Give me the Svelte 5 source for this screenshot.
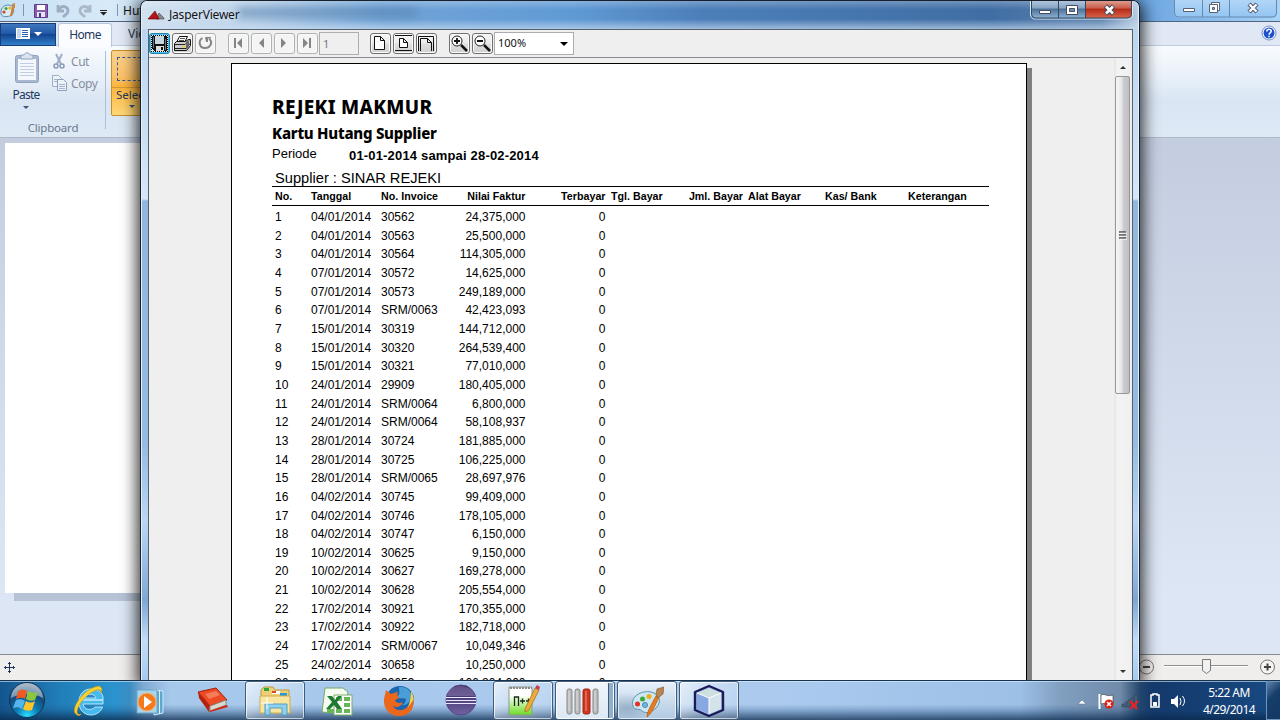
<script>
  const raw = [
    ['04/01/2014', '30562', '24,375,000'], ['04/01/2014', '30563', '25,500,000'],
    ['04/01/2014', '30564', '114,305,000'], ['07/01/2014', '30572', '14,625,000'],
    ['07/01/2014', '30573', '249,189,000'], ['07/01/2014', 'SRM/0063', '42,423,093'],
    ['15/01/2014', '30319', '144,712,000'], ['15/01/2014', '30320', '264,539,400'],
    ['15/01/2014', '30321', '77,010,000'], ['24/01/2014', '29909', '180,405,000'],
    ['24/01/2014', 'SRM/0064', '6,800,000'], ['24/01/2014', 'SRM/0064', '58,108,937'],
    ['28/01/2014', '30724', '181,885,000'], ['28/01/2014', '30725', '106,225,000'],
    ['28/01/2014', 'SRM/0065', '28,697,976'], ['04/02/2014', '30745', '99,409,000'],
    ['04/02/2014', '30746', '178,105,000'], ['04/02/2014', '30747', '6,150,000'],
    ['10/02/2014', '30625', '9,150,000'], ['10/02/2014', '30627', '169,278,000'],
    ['10/02/2014', '30628', '205,554,000'], ['17/02/2014', '30921', '170,355,000'],
    ['17/02/2014', '30922', '182,718,000'], ['17/02/2014', 'SRM/0067', '10,049,346'],
    ['24/02/2014', '30658', '10,250,000'], ['24/02/2014', '30659', '106,204,000']
  ];
  const heads = ['No.', 'Tanggal', 'No. Invoice', 'Nilai Faktur', 'Terbayar', 'Tgl. Bayar', 'Jml. Bayar', 'Alat Bayar', 'Kas/ Bank', 'Keterangan'];
  const right = [3, 4, 6];
</script>

<div class="desktop">
  <!-- Paint, behind -->
  <section class="paint">
    <header class="ptitle">
      <svg width="140" height="22" viewBox="0 0 140 22">
        <path d="M1 11C2 5 8 4 12 6c3 3 2 8-2 10-4 1-8 1-9-2Z" fill="#d3edf6" stroke="#5589a6"/>
        <circle cx="4" cy="12" r="1.6" fill="#e03b2a"/><circle cx="6" cy="8.5" r="1.6" fill="#44a53b"/><circle cx="10" cy="8" r="1.6" fill="#f2b01e"/>
        <path d="M11 16l2-9" stroke="#e0761c" stroke-width="2"/><path d="M12 4l3-1v5h-3z" fill="#c98a48"/>
        <path d="M23.500 4v12M117.500 4v12" stroke="#8392a6"/>
        <path d="M34.500 4.500h13v13h-13z" fill="#8c5bb0" stroke="#5f3b8c"/><path d="M37 5h8v5h-8z" fill="#fff"/><path d="M37 12h8v5h-8z" fill="#dfe6f2"/><path d="M39 13h2v4h-2z" fill="#533580"/>
        <path d="M58 5v6h6M59 9c3-4 9-3 9 2 0 3-3 4-5 6" fill="none" stroke="#9eacc3" stroke-width="2.800"/>
        <path d="M90 5v6h-6M89 9c-3-4-9-3-9 2 0 3 3 4 5 6" fill="none" stroke="#abb7ca" stroke-width="2.800"/>
        <path d="M100 10.500h7" stroke="#222"/><path d="M100 12h7l-3.500 3.500z" fill="#222"/>
      </svg>
      <span class="hut">Hut</span>
    </header>
    <div class="tabs">
      <div class="filetab">
        <svg width="54" height="21" viewBox="0 0 54 21"><path d="M15 4h14v11H15z" fill="#fff"/><path d="M16 5h4v9h-4z" fill="#c4d5ef"/><path d="M21 6.500h6M21 8.500h6M21 10.500h6M21 12.500h6" stroke="#2761af"/><path d="M33 8h8l-4 4z" fill="#fff"/></svg>
      </div>
      <div class="home">Home</div><span class="view">View</span>
      <svg class="help" width="16" height="16" viewBox="0 0 16 16"><circle cx="8" cy="8" r="7" fill="#fff" stroke="#7390c9"/><circle cx="8" cy="8" r="5.500" fill="#1b51cc"/><path d="M5.800 6.500c.2-3 4.600-2.600 4.400-.2C10 8 8 7.700 8 9.700M8 10.800v1.500" fill="none" stroke="#fff" stroke-width="1.500"/></svg>
    </div>
    <div class="ribbon">
      <div class="clip">
        <div class="tools">
          <div class="paste">
            <svg width="28" height="32" viewBox="0 0 28 32"><rect x="2.500" y="3.500" width="23" height="27" rx="2" fill="#a9b8d0" stroke="#8fa2bf"/><path d="M5 7h18v21H5z" fill="#f4f7fc"/><path d="M7 11.500h14M7 14.500h14M7 17.500h14M7 20.500h14M7 23.500h14" stroke="#c1cde0"/><path d="M8 3h3c1-3 5-3 6 0h3v4H8z" fill="#dce4ef" stroke="#8fa2bf"/></svg>
            <span>Paste</span><i class="down"></i>
          </div>
          <div class="cutcopy">
            <div><svg width="19" height="18" viewBox="0 0 19 18"><path d="M4 2l5 10M10 2L5 12" stroke="#9dadc5" stroke-width="2"/><circle cx="4" cy="14" r="2" fill="none" stroke="#8799b6" stroke-width="1.500"/><circle cx="10" cy="14" r="2" fill="none" stroke="#8799b6" stroke-width="1.500"/></svg>Cut</div>
            <div><svg width="19" height="18" viewBox="0 0 19 18"><path d="M.5 1.500h6l3 3v8h-9z" fill="#edf2f9" stroke="#9dadc5"/><path d="M5.500 5.500h6l3 3v8h-9z" fill="#edf2f9" stroke="#8c9fbd"/><path d="M2 5.500h3M2 7.500h3M7 10.500h6M7 12.500h6M7 14.500h6" stroke="#a5b4cc"/></svg>Copy</div>
          </div>
        </div>
        <div class="cap">Clipboard</div>
      </div>
      <div class="select"><div class="seltop"><b></b></div><div class="sellow"><span>Select</span><i class="down"></i></div></div>
    </div>
    <div class="canvas"><div class="sheet"></div></div>
    <footer class="status">
      <svg width="13" height="13" viewBox="0 0 13 13"><path d="M6.500 1v11M1 6.500h11M5 2.500h3M5 10.500h3M2.500 5v3M10.500 5v3" stroke="#20365c"/></svg>
      <svg class="zoom" width="142" height="20" viewBox="0 0 142 20"><g fill="#f5f3f2" stroke="#777"><circle cx="8.500" cy="10" r="7"/><circle cx="129.500" cy="10" r="7"/></g><path d="M5 10h7M126 10h7M129.500 6.500v7" stroke="#444" stroke-width="2"/><path d="M26 8.500h84" stroke="#8f8f8f"/><path d="M26 9.500h84" stroke="#fff"/><path d="M64.500 2.500h8v11l-4 3-4-3z" fill="#f1f1f1" stroke="#777"/></svg>
    </footer>
  </section>
  <div class="caption back">
    <svg width="103" height="18" viewBox="0 0 103 18"><path d="M.5 0v13q0 4 4 4h94q4 0 4-4V0M28.500 0v17M55.500 0v17" fill="none" stroke="#6688b1"/><path d="M9.500 8.500h11v3h-11z" fill="#fff" stroke="#576278"/><path d="M37.500 2.500h8v8h-8z" fill="#fff" stroke="#576278"/><path d="M35.500 4.500h8v8h-8z" fill="#fff" stroke="#576278"/><path d="M38.500 7.500h2v2h-2z" fill="#8fb7e2" stroke="#576278"/><path d="M75 4l8 8m0-8l-8 8" stroke="#576278" stroke-width="4.500"/><path d="M75.500 4.500l7 7m0-7l-7 7" stroke="#fff" stroke-width="2.300"/></svg>
  </div>

  <!-- Report viewer window -->
  <section class="jasper">
    <header class="jtitle">
      <div class="blur"></div>
      <svg width="18" height="10" viewBox="0 0 18 10"><path d="M9 9l3-6 5 5v1z" fill="#888" stroke="#444" stroke-width=".6"/><path d="M1 9l7-8 4 8z" fill="#b5121b" stroke="#600" stroke-width=".6"/></svg>
      <span>JasperViewer</span>
      <svg class="jcap" width="104" height="20" viewBox="0 0 104 20">
        <defs><linearGradient id="r" x2="0" y2="1"><stop stop-color="#e0a597"/><stop offset=".45" stop-color="#cb5d4b"/><stop offset=".5" stop-color="#b52a17"/><stop offset="1" stop-color="#d8674a"/></linearGradient><linearGradient id="b" x2="0" y2="1"><stop stop-color="#b5c9df"/><stop offset=".45" stop-color="#86a3c3"/><stop offset=".5" stop-color="#4c7097"/><stop offset="1" stop-color="#8db3d4"/></linearGradient></defs>
        <path d="M1 0h55v18H5q-4 0-4-4z" fill="url(#b)"/><path d="M56 0h46v14q0 4-4 4H56z" fill="url(#r)"/>
        <path d="M.5 0v14q0 5 5 5h92q5 0 5-5V0" fill="none" stroke="#dbe9f7"/><path d="M1.500 0v14q0 4 4 4h92q4 0 4-4V0M28.500 0v18M55.500 0v18" fill="none" stroke="#33465e"/>
        <path d="M9.500 10.500h11v3h-11z" fill="#fff" stroke="#444d5e"/><path d="M36.500 5.500h11v9h-11z" fill="#fff" stroke="#444d5e"/><path d="M39.500 8.500h5v3h-5z" fill="#6e90b4" stroke="#444d5e"/>
        <path d="M75.500 6l8 8m0-8l-8 8" stroke="#454a5b" stroke-width="4.800"/><path d="M76 6.500l7 7m0-7l-7 7" stroke="#fff" stroke-width="2.600"/>
      </svg>
    </header>
    <div class="client">
      <div class="toolbar">
        <button class="focus" aria-label="Save"><svg viewBox="0 0 21 21" shape-rendering="crispEdges"><path d="M2 2h17v17H2z" fill="#dfe9ee"/><path d="M3 3h15v15H5l-2-2z" fill="#111"/><path d="M6 3h9v8H6z" fill="#c7d5dc"/><path d="M7 13h8v5H7z" fill="#ddd"/><path d="M12 14h2v3h-2z" fill="#111"/><path d="M4.500 4v11M16.500 6v11" stroke="#68777e"/><path d="M2 2.500h17M2 18.500h17M2.500 2v17M18.500 2v17" fill="none" stroke="#000" stroke-dasharray="1 1"/></svg></button>
        <button aria-label="Print"><svg viewBox="0 0 21 21"><path d="M7.500 3.500h8l-3 6h-8z" fill="#fff" stroke="#111"/><path d="M8 5.500h5M7 7.500h5" stroke="#555"/><path d="M2.500 10.500l2-2h9l3-2h2v6l-4 5h-12z" fill="#ccc" stroke="#111"/><path d="M3 11.500h10l4-4M3 15.500h11l4-5" fill="none" stroke="#222"/><path d="M14 10v7l3-4V8z" fill="#666"/><path d="M10 13.500h3" stroke="#e4d91c" stroke-width="1.500"/></svg></button>
        <button class="off" aria-label="Reload"><svg viewBox="0 0 21 21"><path d="M7.500 5C3 7.500 4 15 10 15s8-6.500 4-9" fill="none" stroke="#858585" stroke-width="2"/><path d="M10 4h6v1.500h-3V9h-2z" fill="#858585"/></svg></button>
        <span class="gap"></span>
        <button class="off" aria-label="First"><svg viewBox="0 0 21 21"><path d="M6 5h2v10H6zM14 5v10l-5-5z" fill="#858585"/></svg></button>
        <button class="off" aria-label="Previous"><svg viewBox="0 0 21 21"><path d="M13 5v10l-5-5z" fill="#858585"/></svg></button>
        <button class="off" aria-label="Next"><svg viewBox="0 0 21 21"><path d="M7 5v10l5-5z" fill="#858585"/></svg></button>
        <button class="off" aria-label="Last"><svg viewBox="0 0 21 21"><path d="M12 5h2v10h-2zM6 5v10l5-5z" fill="#858585"/></svg></button>
        <div class="pageno">1</div>
        <button aria-label="Actual size"><svg viewBox="0 0 21 21"><path d="M4.500 3.500h6l4 4v9h-10z M10.500 3.500v4h4" fill="#fff" stroke="#111"/></svg></button>
        <button aria-label="Fit page"><svg viewBox="0 0 21 21"><path d="M2 2.500h17M2 17.500h17" stroke="#111"/><path d="M6.500 5.500h4l4 4v5h-8z M10.500 5.500v4h4" fill="#fff" stroke="#111"/></svg></button>
        <button aria-label="Fit width"><svg viewBox="0 0 21 21"><path d="M2.500 18V3.500h15V18M4.500 18V5.500h7l4 4V18M11.500 5.500v4h4" fill="none" stroke="#111"/></svg></button>
        <span class="gap"></span>
        <button aria-label="Zoom in"><svg viewBox="0 0 21 21"><circle cx="8" cy="8" r="5" fill="#fff" stroke="#222"/><path d="M12 12l6 6" stroke="#111" stroke-width="2.500"/><path d="M5 8h6M8 5v6" stroke="#111" stroke-width="1.800"/></svg></button>
        <button aria-label="Zoom out"><svg viewBox="0 0 21 21"><circle cx="8" cy="8" r="5" fill="#fff" stroke="#222"/><path d="M12 12l6 6" stroke="#111" stroke-width="2.500"/><path d="M5 8h6" stroke="#111" stroke-width="1.800"/></svg></button>
        <div class="combo"><span>100%</span><i></i></div>
      </div>
      <div class="viewer">
        <div class="area">
          <article class="page">
            <h1>REJEKI MAKMUR</h1>
            <h2>Kartu Hutang Supplier</h2>
            <div class="period"><span>Periode</span><b>01-01-2014 sampai 28-02-2014</b></div>
            <div class="supplier">Supplier : SINAR REJEKI</div>
            <div class="row head">
              {#each heads as h, i}<span class:r={right.includes(i)}>{h}</span>{/each}
            </div>
            {#each raw as d, i}
              <div class="row"><span>{i + 1}</span><span>{d[0]}</span><span>{d[1]}</span><span class="r">{d[2]}</span><span class="r">0</span></div>
            {/each}
          </article>
          <div class="pshadow"></div>
        </div>
        <div class="scroll"><i class="up"></i><div class="thumb"><svg width="8" height="9" viewBox="0 0 8 9"><path d="M0 1h7M0 4h7M0 7h7" stroke="#555" stroke-width="1.300"/><path d="M1 2.300h7M1 5.300h7M1 8.300h7" stroke="#fff" stroke-width=".8"/></svg></div><i class="dn"></i></div>
      </div>
    </div>
  </section>

  <!-- Taskbar -->
  <nav class="taskbar">
    <div class="start">
      <svg width="38" height="38" viewBox="0 0 38 38"><defs><radialGradient id="orb" cx=".5" cy=".95" r=".9"><stop stop-color="#28e0ff"/><stop offset=".35" stop-color="#0e7db5"/><stop offset=".7" stop-color="#144b7c"/><stop offset="1" stop-color="#6d8ba5"/></radialGradient></defs><circle cx="19" cy="19" r="17.500" fill="url(#orb)" stroke="#12314f"/><path d="M3 17C4 6 13 2 19 2s15 4 16 15c-9-5-23-5-32 0Z" fill="#fff" opacity=".4"/><path d="M10 10c3-2 6-2 9 0l-2 8c-3-2-6-1-9 0z" fill="#ee5a24"/><path d="M20 10c3 2 6 2 10 1l-3 8c-3 1-6 1-9-1z" fill="#8cc63e"/><path d="M8 19c3-1 6-1 9 1l-3 8c-3-2-5-2-9-1z" fill="#55b6ef"/><path d="M18 20c3 2 6 2 9 0l-3 9c-3 1-6 1-9-1z" fill="#fcc62b"/></svg>
    </div>
    <div class="task"><svg viewBox="0 0 34 34"><path d="M11 16H31C32 10 27 5 19 5 12 5 7 10 7 18s5 13 12 13c5 0 10-3 11.500-8H23c-3 4-11 3-12-3H31V16ZM13 14c1-5 10-5 11 0z" fill="#46b9ee" fill-rule="evenodd" stroke="#d4f4ff" stroke-width=".8"/><path d="M4 30C-2 26 10 7 23 3c6-2 8 1 6 6 0-4-3-4-7-2C13 11 5 22 5 28c0 2 2 3 4 2-1 2-3 2-5 0" fill="#f8d22e" stroke="#d39b0a" stroke-width=".6"/></svg></div>
    <div class="task"><svg viewBox="0 0 34 34"><path d="M20 6l9 1v22l-9 2z" fill="#5fa7cd" stroke="#c8ecfb"/><path d="M25.500 6v24" stroke="#d7f1fd"/><path d="M3 6h20v23H3z" fill="#a7d5ed" stroke="#6ba5c5"/><circle cx="13" cy="18" r="9" fill="#f47a1c" stroke="#fbb16c"/><path d="M10 12l8 6-8 6z" fill="#fff"/></svg></div>
    <div class="task"><svg viewBox="0 0 34 34"><path d="M2 8l18-4 11 12-17 6z" fill="#ed4a25" stroke="#a71c0a"/><path d="M2 8l1 6 10 14 1-6z" fill="#b8200e"/><path d="M14 22l16-6v5l-16 6z" fill="#d9d9cf" stroke="#8b867c"/><path d="M13 27l18-6 1 2-18 5z" fill="#d42610"/><path d="M9 10l11-3 4 4-11 4z" fill="#f47c59"/></svg></div>
    <div class="task open"><svg viewBox="0 0 34 34"><path d="M3 6l3-3h9l2 3h14v9H3z" fill="#efcf74" stroke="#bb9840"/><path d="M6 4h5v3H6z" fill="#28a83b"/><path d="M14 7h8v3h-8z" fill="#fff"/><path d="M14 7h4v2h-4z" fill="#d44824"/><path d="M22 9h7v3h-7z" fill="#2498d8"/><path d="M2 12h30v17H2z" fill="#f8e5a0" stroke="#cfae57"/><path d="M7 31V20h22v11h-5v-7H12v7z" fill="#8fd1ee" stroke="#519ec1"/><path d="M9 13v12M3 19h12" stroke="#fff"/></svg></div>
    <div class="task"><svg viewBox="0 0 34 34"><path d="M2 28l3-24h18l5 4-3 22z" fill="#f5fbf0" stroke="#74a864"/><path d="M14 11h18v20H14z" fill="#fff" stroke="#7bab6d"/><path d="M16 13h6v4h-6zM24 13h6v4h-6zM24 19h6v4h-6zM16 25h6v4h-6zM24 25h6v4h-6zM7 25h7v4H7z" fill="#69b65a"/><path d="M7 12h5l3 4 3-4h4l-5 6 5 7h-5l-3-4-4 4H6l6-7z" fill="#1e7a31"/></svg></div>
    <div class="task"><svg viewBox="0 0 34 34"><circle cx="18" cy="16" r="14" fill="#1c65b0"/><path d="M17 3c9-1 13 5 12 11-1 5-6 8-10 7 3 0 5-3 5-6-3-2-8 1-10-3 5 0 3-5 3-9Z" fill="#4a9ed6"/><path d="M29 7c7 13-1 22-12 24 10-5 12-14 12-24" fill="#ffd342"/><path d="M4 6l5 4c3-1 5-2 7-2-1 3-1 4 1 5-1 3-4 2-4 4 2 2 5 3 8 1-2 6-9 6-10 3 1 6 13 9 20-5 2 10-5 16-14 16S1 25 2 15z" fill="#ea671c"/></svg></div>
    <div class="task"><svg viewBox="0 0 34 34"><defs><linearGradient id="ec" x2="0" y2="1"><stop stop-color="#352158"/><stop offset="1" stop-color="#7064a4"/></linearGradient></defs><circle cx="17" cy="16" r="15" fill="url(#ec)" stroke="#594481"/><path d="M5 6Q16-2 28 6l3 6H3z" fill="#a698ca" opacity=".4"/><path d="M2 13.500h30M2 16.500h30M2 19.500h30" stroke="#eceaff" stroke-width="1.200"/></svg></div>
    <div class="task open"><svg viewBox="0 0 34 34"><defs><linearGradient id="np" x2="0" y2="1"><stop offset=".3" stop-color="#fff"/><stop offset="1" stop-color="#6bdc20"/></linearGradient></defs><path d="M3 3h23v28H3z" fill="url(#np)" stroke="#8c9989"/><path d="M4 4h22" stroke="#888" stroke-width="2" stroke-dasharray="2 1"/><path d="M8.500 22V13h4v9M14 17h5M16.500 14.500v5M20 17h5M22.500 14.500v5" fill="none" stroke="#182d15" stroke-width="1.300"/><path d="M19 25L29 4l4 2-10 20-4 2z" fill="#efab34" stroke="#9c6828" stroke-width=".7"/><path d="M29 4l2-3 3 2-1 3z" fill="#c73954"/></svg></div>
    <div class="task open stack"><svg viewBox="0 0 34 34"><g fill="#bbb" stroke="#898989"><rect x="1" y="5" width="5" height="25" rx="2"/><rect x="9" y="5" width="5" height="25" rx="2"/><rect x="27" y="5" width="5" height="25" rx="2"/></g><rect x="17" y="5" width="7" height="25" rx="2" fill="#cf361c" stroke="#a42311"/><path d="M3 7v20M11 7v20M20 7v20M29 7v20" stroke="#fff" opacity=".5"/></svg></div>
    <div class="task open smudge"><svg viewBox="0 0 34 34"><path d="M3 22C0 13 11 6 21 8c9 2 11 10 5 16-6 6-12 5-14 3-1-3-8 0-9-5Z" fill="#cbe7f4" stroke="#5c94ad"/><circle cx="7.500" cy="20" r="2.500" fill="#e33225"/><circle cx="12.500" cy="15" r="2.500" fill="#3caa31"/><circle cx="19" cy="12.500" r="2.500" fill="#f0ac15"/><circle cx="15" cy="21" r="2.500" fill="#79b7d7" stroke="#4287ae"/><path d="M17 33c0-5 4-12 9-21l3 1c-4 9-7 16-12 20Z" fill="#ec7b1c" stroke="#ae5512" stroke-width=".7"/><path d="M26 11l1-6 7-2-1 7-5 4z" fill="#b98551" stroke="#805325" stroke-width=".6"/></svg></div>
    <div class="task open"><svg viewBox="0 0 34 34"><path d="M17 2l14 6v18l-14 6-14-6V8z" fill="#9db9e8" stroke="#1b1b57" stroke-width="2.400" stroke-linejoin="round"/><path d="M5 9l12-5 12 5-12 5z" fill="#cddfdf"/><path d="M17 14l12-5v16l-12 5z" fill="#d3e3e9"/><path d="M5 9l12 5v16L5 25z" fill="#88a8e2"/><path d="M5 9l12 5 12-5M17 14v16" fill="none" stroke="#fff"/></svg></div>
    <div class="tray">
      <svg width="110" height="24" viewBox="0 0 110 24"><path d="M1 15h8l-4-4z" fill="#fff" stroke="#55718e" stroke-width=".5"/><path d="M22.500 5v15" stroke="#fff" stroke-width="2"/><path d="M24 6c4-2 5 2 12 0v9c-5 2-7-2-12 0z" fill="#fff" stroke="#333" stroke-width=".6"/><circle cx="32" cy="15" r="4.500" fill="#d91f16"/><path d="M30 13l4 4m0-4l-4 4" stroke="#fff" stroke-width="1.500"/><path d="M45 15h2v3h-2zM48 13h2v5h-2zM51 11h2v7h-2zM54 9h2v9h-2zM58 6h2v12h-2z" fill="#586d83" stroke="#263b51" stroke-width=".6"/><path d="M53 12l7 8m1-8l-8 8" stroke="#f02020" stroke-width="2"/><path d="M74 6h2V5h4v1h2v12h-8z" fill="none" stroke="#fff" stroke-width="1.500"/><path d="M76 13h4v4h-4z" fill="#fff"/><path d="M94 10h3l4-4v13l-4-4h-3z" fill="#fff"/><path d="M103 9q2 3 0 7M105.500 7q4 5 0 10" stroke="#fff" fill="none"/></svg>
      <div class="clock"><span>5:22 AM</span><span>4/29/2014</span></div>
      <div class="peek"></div>
    </div>
  </nav>
</div>

<style>
  :global(body) { margin: 0; overflow: hidden; }
  .desktop { position: relative; width: 1280px; height: 720px; overflow: hidden; font: 12px "Noto Sans", sans-serif; color: #1e395b; }
  .desktop * { box-sizing: border-box; }
  svg { display: block; flex: none; }
  .paint { position: absolute; inset: 0 0 39px; display: flex; flex-direction: column; }
  .ptitle { height: 22px; display: flex; border-bottom: 1px solid #51657f; background: linear-gradient(90deg, #c5e0f4 0, #d8eaf8 110px, #7aa9dc 300px, #6aa4df 1140px, #a9d3f7 1280px); }
  .hut { margin-left: -17px; font-size: 12px; line-height: 21px; color: #111; }
  .tabs { height: 24px; display: flex; background: #dfe8f4; border-bottom: 1px solid #bccce0; position: relative; }
  .filetab { width: 56px; height: 23px; margin-top: 1px; background: linear-gradient(#3f78bd, #2159a8 45%, #15448f 50%, #2f7fc9); border: 1px solid #173e7b; }
  .home { width: 54px; height: 24px; margin: 1px 0 0 2px; padding-top: 2px; text-align: center; background: #fafcff; border: 1px solid #b4c7de; border-bottom: 0; border-radius: 3px 3px 0 0; letter-spacing: -.6px; }
  .view { padding: 3px 0 0 16px; }
  .help { margin: 3px 3px 0 auto; }
  .ribbon { height: 92px; display: flex; background: linear-gradient(#f8fbfe, #e5eef8 40%, #d9e5f3 60%, #dde9f5 97%); border-bottom: 1px solid #aeb9ca; }
  .clip { width: 106px; height: 78px; margin-top: 5px; border-right: 1px solid #aebed3; }
  .tools { display: flex; height: 68px; }
  .paste { width: 52px; display: flex; flex-direction: column; align-items: center; color: #1e395b; }
  .paste svg { margin: 1px 0 3px 2px; }
  .paste span { line-height: 16px; letter-spacing: -.8px; }
  .down { display: block; width: 0; border: 3px solid transparent; border-top-color: #3b557b; border-bottom: 0; margin-top: 3px; }
  .cutcopy { color: #868e9c; letter-spacing: -.45px; }
  .cutcopy div { display: flex; align-items: center; height: 20px; }
  .cutcopy div + div { height: 24px; }
  .cap { width: 106px; text-align: center; margin-top: 1px; font-size: 11.500px; letter-spacing: -.2px; color: #69778d; }
  .select { width: 60px; height: 66px; margin: 4px 0 0 5px; border: 1px solid #c69028; border-radius: 2px; background: linear-gradient(#fbd18b, #fcc269 40%, #fdb53d 55%, #fed878); }
  .seltop { height: 37px; border-bottom: 1px solid #d69832; padding: 6px 0 0 5px; }
  .seltop b { display: block; width: 40px; height: 24px; border: 1px dashed #355ba0; }
  .sellow { padding-left: 4px; line-height: 14px; font-size: 11.500px; }
  .sellow .down { margin: 3px 0 0 13px; }
  .canvas { flex: 1; background: linear-gradient(#c4cde0, #dce6f4 88%); padding: 5px; }
  .sheet { width: 900px; height: 450px; background: #fff; box-shadow: 9px 8px 0 #b6c3d7; }
  .status { height: 27px; display: flex; justify-content: space-between; align-items: center; padding: 0 3px 2px; background: #f0eded; border-top: 1px solid #858992; }
  .zoom { margin-right: -3px; }
  .caption.back { position: absolute; left: 1174px; top: 0; background: linear-gradient(#b1d6f7, #91c4f2); border-radius: 0 0 5px 5px; }

  .jasper { position: absolute; left: 140px; top: 0; width: 1000px; height: 681px; display: flex; flex-direction: column; padding: 0 6px 0 7px; border: 1px solid #18202c; border-bottom: 0; border-radius: 7px 7px 0 0; box-shadow: 0 4px 16px 3px rgba(0,0,0,.8), inset 1px 0 #e4f1fc, inset -1px 0 #e4f1fc; background: linear-gradient(180deg, #b8d3ee 0, #d5e6f8 198px, #91b7de 200px, #94bbe2 440px, #bad6f5 520px, #7fa7d6 600px, #c4ddf7 640px, #a4c9f0); }
  .jtitle { height: 28px; margin: 0 -5px 0 -6px; display: flex; align-items: flex-start; position: relative; border-radius: 5px 5px 0 0; overflow: hidden; background: linear-gradient(180deg, rgba(255,255,255,.25), transparent 30%, transparent 65%, rgba(205,223,242,.65)), linear-gradient(90deg, #d1e1f0 0, #b7cfe8 110px, #72a5d8 240px, #609ad5 430px, #4c7fb9 560px, #406ea4 850px, #6084af 960px, #bfd2e7 998px); }
  .jtitle > svg:not(.jcap) { margin: 9px 4px 0 5px; position: relative; }
  .jtitle span { position: relative; color: #101318; font-size: 12px; line-height: 16px; padding-top: 6px; letter-spacing: -.2px; text-shadow: 0 0 7px #fff; }
  .blur { position: absolute; left: 95px; top: 7px; width: 180px; height: 9px; background: #527da8; opacity: .6; filter: blur(5px); }
  .jcap { margin: -1px 4px 0 auto; position: relative; }
  .client { height: 652px; border: 1px solid #56616e; border-bottom: 0; background: #efefef; display: flex; flex-direction: column; font-family: "Noto Sans", sans-serif; }
  .toolbar { height: 28px; display: flex; align-items: center; gap: 2px; border-bottom: 1px solid #868a91; color: #111; }
  button { width: 21px; height: 21px; padding: 0; border: 1px solid #707070; border-radius: 3px; background: linear-gradient(#f5f5f5, #ebebeb 48%, #dedede 52%, #d1d1d1); box-shadow: inset 0 0 0 1px #fafafa; flex: none; overflow: hidden; }
  button svg { width: 21px; height: 21px; margin: -1px; }
  button.off { border-color: #adb2b5; background: #f4f4f4; }
  button.focus { border-color: #2781ad; background: #46c4f0; box-shadow: none; }
  .gap { width: 8px; flex: none; }
  .pageno { width: 40px; height: 23px; margin: 0 9px 0 -1px; padding: 3px 3px; border: 1px solid #abadb3; color: #777; font-size: 11px; line-height: 15px; background: #efefef; }
  .combo { width: 80px; height: 23px; margin-left: -1px; border: 1px solid #abadb3; background: #fff; display: flex; align-items: center; padding: 0 5px 2px 3px; font-size: 11px; justify-content: space-between; }
  .combo i { border: 4px solid transparent; border-top-color: #000; border-bottom: 0; margin-top: 3px; }
  .viewer { flex: 1; display: flex; min-height: 0; overflow: hidden; }
  .area { width: 965px; flex: none; padding: 5px 0 0 82px; display: flex; overflow: hidden; }
  .page { width: 796px; height: 640px; flex: none; border: 1px solid #000; border-bottom: 0; background: #fff; padding: 33px 0 0 40px; color: #000; font-family: "Liberation Sans", Arial, sans-serif; overflow: hidden; }
  .pshadow { width: 5px; margin-top: 5px; background: #808080; flex: none; }
  h1 { margin: 0; font: 800 19px/20px "Noto Sans", sans-serif; height: 28px; white-space: nowrap; letter-spacing: .3px; }
  h2 { margin: 0; font: 800 15px/16px "Noto Sans", sans-serif; height: 21px; white-space: nowrap; letter-spacing: -.25px; }
  .period { display: flex; height: 23px; font-size: 13px; line-height: 16px; }
  .period span { width: 77px; }
  .period b { padding-top: 2px; letter-spacing: .17px; }
  .supplier { font-size: 14.670px; line-height: 18px; height: 17px; padding-left: 3px; white-space: nowrap; }
  .row { display: grid; grid-template-columns: 36px 70px 68px 82px 80px 62px 75px 77px 83px 83px; width: 717px; height: 18.667px; align-items: center; font-size: 12px; white-space: nowrap; padding-left: 3px; }
  .row.head { height: 20px; font-size: 10.670px; letter-spacing: .02px; font-weight: bold; border-top: 1.500px solid #000; border-bottom: 1.500px solid #000; margin-bottom: 1.700px; }
  .row .r { text-align: right; padding-right: 5.500px; }
  .row.head .r:nth-child(7) { padding-right: 5px; }
  .scroll { width: 17px; display: flex; flex-direction: column; align-items: center; background: linear-gradient(90deg, #e5e5e5, #f3f3f3 20%, #f0f0f0); flex: none; }
  .scroll i { width: 0; border: 3px solid transparent; }
  .up { border-bottom-color: #333 !important; border-top: 0 !important; margin: 8px 0 7px; }
  .dn { border-top-color: #333 !important; border-bottom: 0 !important; margin-top: 276px; }
  .thumb { width: 15px; height: 318px; border: 1px solid #979797; border-radius: 2px; background: linear-gradient(90deg, #f5f5f5, #e7e7e9 45%, #cdcdd1 55%, #c0c0c4); display: grid; place-items: center; flex: none; }

  .taskbar { position: absolute; left: 0; right: 0; bottom: 0; height: 40px; display: flex; border-top: 1px solid #18334f; box-shadow: inset 0 1px rgba(220,240,255,.6); background: linear-gradient(180deg, transparent 0, transparent 60%, rgba(20,65,115,.25) 75%, rgba(9,40,75,.75) 100%), linear-gradient(90deg, #13558f 0, #217eb8 60px, #2b93ce 115px, #3c8dc1 130px, #80abd4 144px, #a6c8eb 170px, #abcaee 780px, #9dc0e7 1020px, #819fc0 1060px, #718baa 1120px, #24466d 1140px, #14396b 1152px, #174a83 1280px); }
  .start { width: 59px; padding: 0 0 0 8px; }
  .task { width: 60px; height: 39px; margin-right: 2px; padding-right: 1px; display: grid; place-items: center; flex: none; border: 1px solid transparent; }
  .task svg { width: 34px; height: 34px; }
  .open { border-color: #415c78; border-radius: 3px; box-shadow: inset 0 0 0 1px rgba(255,255,255,.65); background: linear-gradient(135deg, rgba(255,255,255,.7), rgba(255,255,255,.3) 50%, rgba(255,255,255,.12)); }
  .stack { background: linear-gradient(#f1f6fc, #dce8f5); box-shadow: inset 0 0 0 1px #fff, inset -5px 0 #92afca, inset -6px 0 #415c78; padding-right: 5px; }
  .smudge { background: radial-gradient(ellipse at 15% 70%, rgba(63,91,122,.3), transparent 40%), linear-gradient(#e7f0fa, #b0c9e2); }
  .tray { margin-left: auto; display: flex; color: #fff; }
  .tray > svg { margin: 8px 7px 0 0; }
  .clock { width: 70px; display: flex; flex-direction: column; align-items: center; font-size: 12px; line-height: 17px; padding-top: 3px; letter-spacing: -.55px; }
  .peek { width: 14px; margin-left: 2px; border: 1px solid #6f94bb; border-right: 0; background: linear-gradient(135deg, #5f83a8, #163e6b 40%, #123863); }
</style>
